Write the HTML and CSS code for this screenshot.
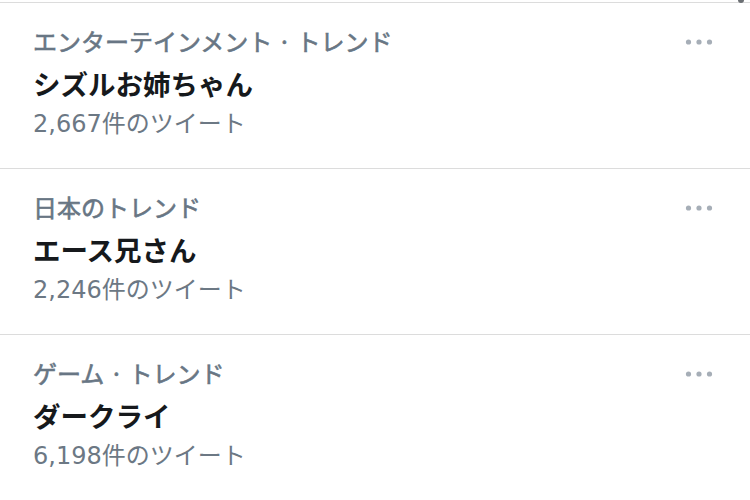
FILE: index.html
```html
<!DOCTYPE html>
<html lang="ja">
<head>
<meta charset="utf-8">
<link rel="stylesheet" href="styles.css">
</head>
<body>
<div class="page">
  <span class="scroll-dot"></span>
  <ul class="trends">
    <li class="trend">
      <div class="trend-text">
        <div class="trend-meta">エンターテインメント · トレンド</div>
        <div class="trend-name">シズルお姉ちゃん</div>
        <div class="trend-count">2,667件のツイート</div>
      </div>
      <button class="more" aria-label="その他">
        <svg width="28" height="8" viewBox="0 0 28 8"><circle cx="3.5" cy="4" r="2.6"/><circle cx="14" cy="4" r="2.6"/><circle cx="24.5" cy="4" r="2.6"/></svg>
      </button>
    </li>
    <li class="trend">
      <div class="trend-text">
        <div class="trend-meta">日本のトレンド</div>
        <div class="trend-name">エース兄さん</div>
        <div class="trend-count">2,246件のツイート</div>
      </div>
      <button class="more" aria-label="その他">
        <svg width="28" height="8" viewBox="0 0 28 8"><circle cx="3.5" cy="4" r="2.6"/><circle cx="14" cy="4" r="2.6"/><circle cx="24.5" cy="4" r="2.6"/></svg>
      </button>
    </li>
    <li class="trend">
      <div class="trend-text">
        <div class="trend-meta">ゲーム · トレンド</div>
        <div class="trend-name">ダークライ</div>
        <div class="trend-count">6,198件のツイート</div>
      </div>
      <button class="more" aria-label="その他">
        <svg width="28" height="8" viewBox="0 0 28 8"><circle cx="3.5" cy="4" r="2.6"/><circle cx="14" cy="4" r="2.6"/><circle cx="24.5" cy="4" r="2.6"/></svg>
      </button>
    </li>
  </ul>
</div>
</body>
</html>
```
FILE: styles.css
```css
html, body {
  margin: 0;
  padding: 0;
  background: #ffffff;
}
body {
  font-family: "Noto Sans CJK JP", "Noto Sans", sans-serif;
}
.page {
  position: relative;
  width: 750px;
  height: 500px;
  overflow: hidden;
  padding-top: 2px;
  box-sizing: border-box;
}
.scroll-dot {
  position: absolute;
  left: 738px;
  top: -3px;
  width: 6px;
  height: 6px;
  border-radius: 50%;
  background: #6b6f73;
}
.trends {
  list-style: none;
  margin: 0;
  padding: 0;
  border-top: 1px solid #dcdcdc;
}
.trend {
  display: flex;
  align-items: flex-start;
  height: 165px;
  border-bottom: 1px solid #dcdcdc;
  padding: 0 37px 0 33px;
  box-sizing: content-box;
}
.trend-text {
  flex: 1;
  display: flex;
  flex-direction: column;
  padding-top: 22px;
}
.trend-meta {
  font-size: 24px;
  line-height: 32px;
  font-weight: 400;
  -webkit-text-stroke: 0.6px #687684;
  color: #687684;
  white-space: pre;
}
.trend-name {
  margin-top: 6px;
  font-size: 27.5px;
  line-height: 40px;
  font-weight: 700;
  color: #16191c;
}
.trend-count {
  margin-top: 1px;
  font-family: "DejaVu Sans", "Noto Sans CJK JP", sans-serif;
  font-size: 24px;
  line-height: 40px;
  font-weight: 400;
  color: #6c7884;
}
.more {
  margin-top: 35px;
  padding: 0;
  border: 0;
  background: none;
  display: flex;
  line-height: 0;
}
.more svg {
  fill: #a6aeb7;
}
```
